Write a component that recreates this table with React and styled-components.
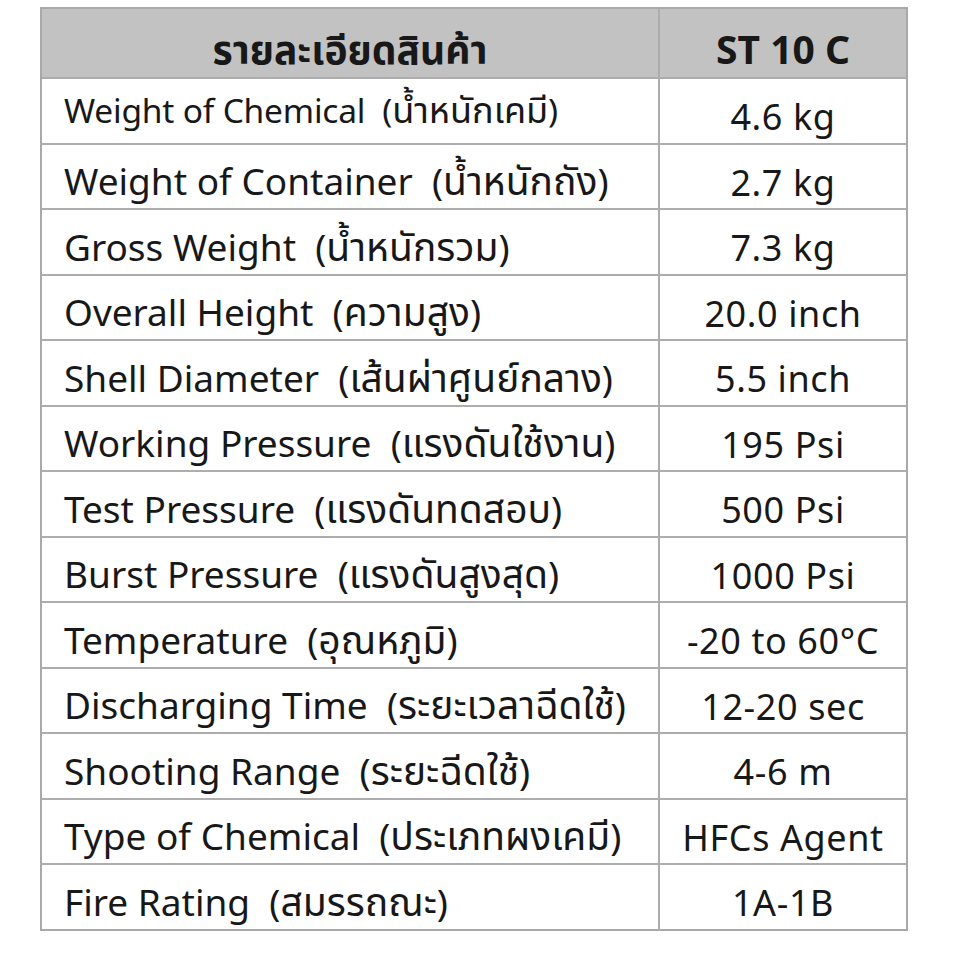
import React from "react";
import styled, { createGlobalStyle } from "styled-components";

const Global = createGlobalStyle`
  html, body { margin: 0; padding: 0; background: #ffffff; }
  body { font-family: "Noto Sans", "Noto Sans Thai", "Open Sans", sans-serif; color: #181818; }
`;

const Page = styled.div`
  padding: 7px 0 0 40px;
`;

const Table = styled.div`
  display: grid;
  grid-template-columns: 616px 246px;
  width: 868px;
  border: 2px solid #a9a9a9;
  box-sizing: border-box;
  background: #adadad;
  gap: 2px;
`;

const Cell = styled.div`
  box-sizing: border-box;
  height: 63.5px;
  display: flex;
  align-items: flex-end;
  line-height: 1;
  background: #ffffff;
  white-space: pre;
  color: #181818;
  overflow: hidden;
`;

const HeadCell = styled(Cell)`
  height: 68px;
  justify-content: center;
  background: #c2c2c2;
  font-size: 39px;
  font-weight: 700;
  padding-bottom: 9px;
`;

const LabelCell = styled(Cell)`
  justify-content: flex-start;
  padding: 0 0 ${(p) => (p.$first ? "15px" : "9px")} 22px;
  font-size: ${(p) => (p.$first ? "33.5px" : "37px")};
  letter-spacing: ${(p) => (p.$first ? "-0.2px" : "0px")};
`;

const LabelText = styled.span`
  display: block;
  line-height: 1;
`;

const Thai = styled.span`
  font-size: ${(p) => (p.$first ? "36px" : "39px")};
  letter-spacing: 0;
  line-height: 0;
`;

const ValueCell = styled(Cell)`
  justify-content: center;
  padding-bottom: 7.5px;
  font-size: 36px;
  letter-spacing: 0.6px;
`;

const rows = [
  ["Weight of Chemical", "น้ำหนักเคมี", "4.6 kg"],
  ["Weight of Container", "น้ำหนักถัง", "2.7 kg"],
  ["Gross Weight", "น้ำหนักรวม", "7.3 kg"],
  ["Overall Height", "ความสูง", "20.0 inch"],
  ["Shell Diameter", "เส้นผ่าศูนย์กลาง", "5.5 inch"],
  ["Working Pressure", "แรงดันใช้งาน", "195 Psi"],
  ["Test Pressure", "แรงดันทดสอบ", "500 Psi"],
  ["Burst Pressure", "แรงดันสูงสุด", "1000 Psi"],
  ["Temperature", "อุณหภูมิ", "-20 to 60°C"],
  ["Discharging Time", "ระยะเวลาฉีดใช้", "12-20 sec"],
  ["Shooting Range", "ระยะฉีดใช้", "4-6 m"],
  ["Type of Chemical", "ประเภทผงเคมี", "HFCs Agent"],
  ["Fire Rating", "สมรรถณะ", "1A-1B"],
];

export default function App() {
  return (
    <Page>
      <Global />
      <Table>
        <HeadCell>รายละเอียดสินค้า</HeadCell>
        <HeadCell>ST 10 C</HeadCell>
        {rows.map(([en, th, value], i) => (
          <React.Fragment key={en}>
            <LabelCell $first={i === 0}>
              <LabelText>
                {en + "  ("}
                <Thai $first={i === 0}>{th}</Thai>
                {")"}
              </LabelText>
            </LabelCell>
            <ValueCell>{value}</ValueCell>
          </React.Fragment>
        ))}
      </Table>
    </Page>
  );
}
